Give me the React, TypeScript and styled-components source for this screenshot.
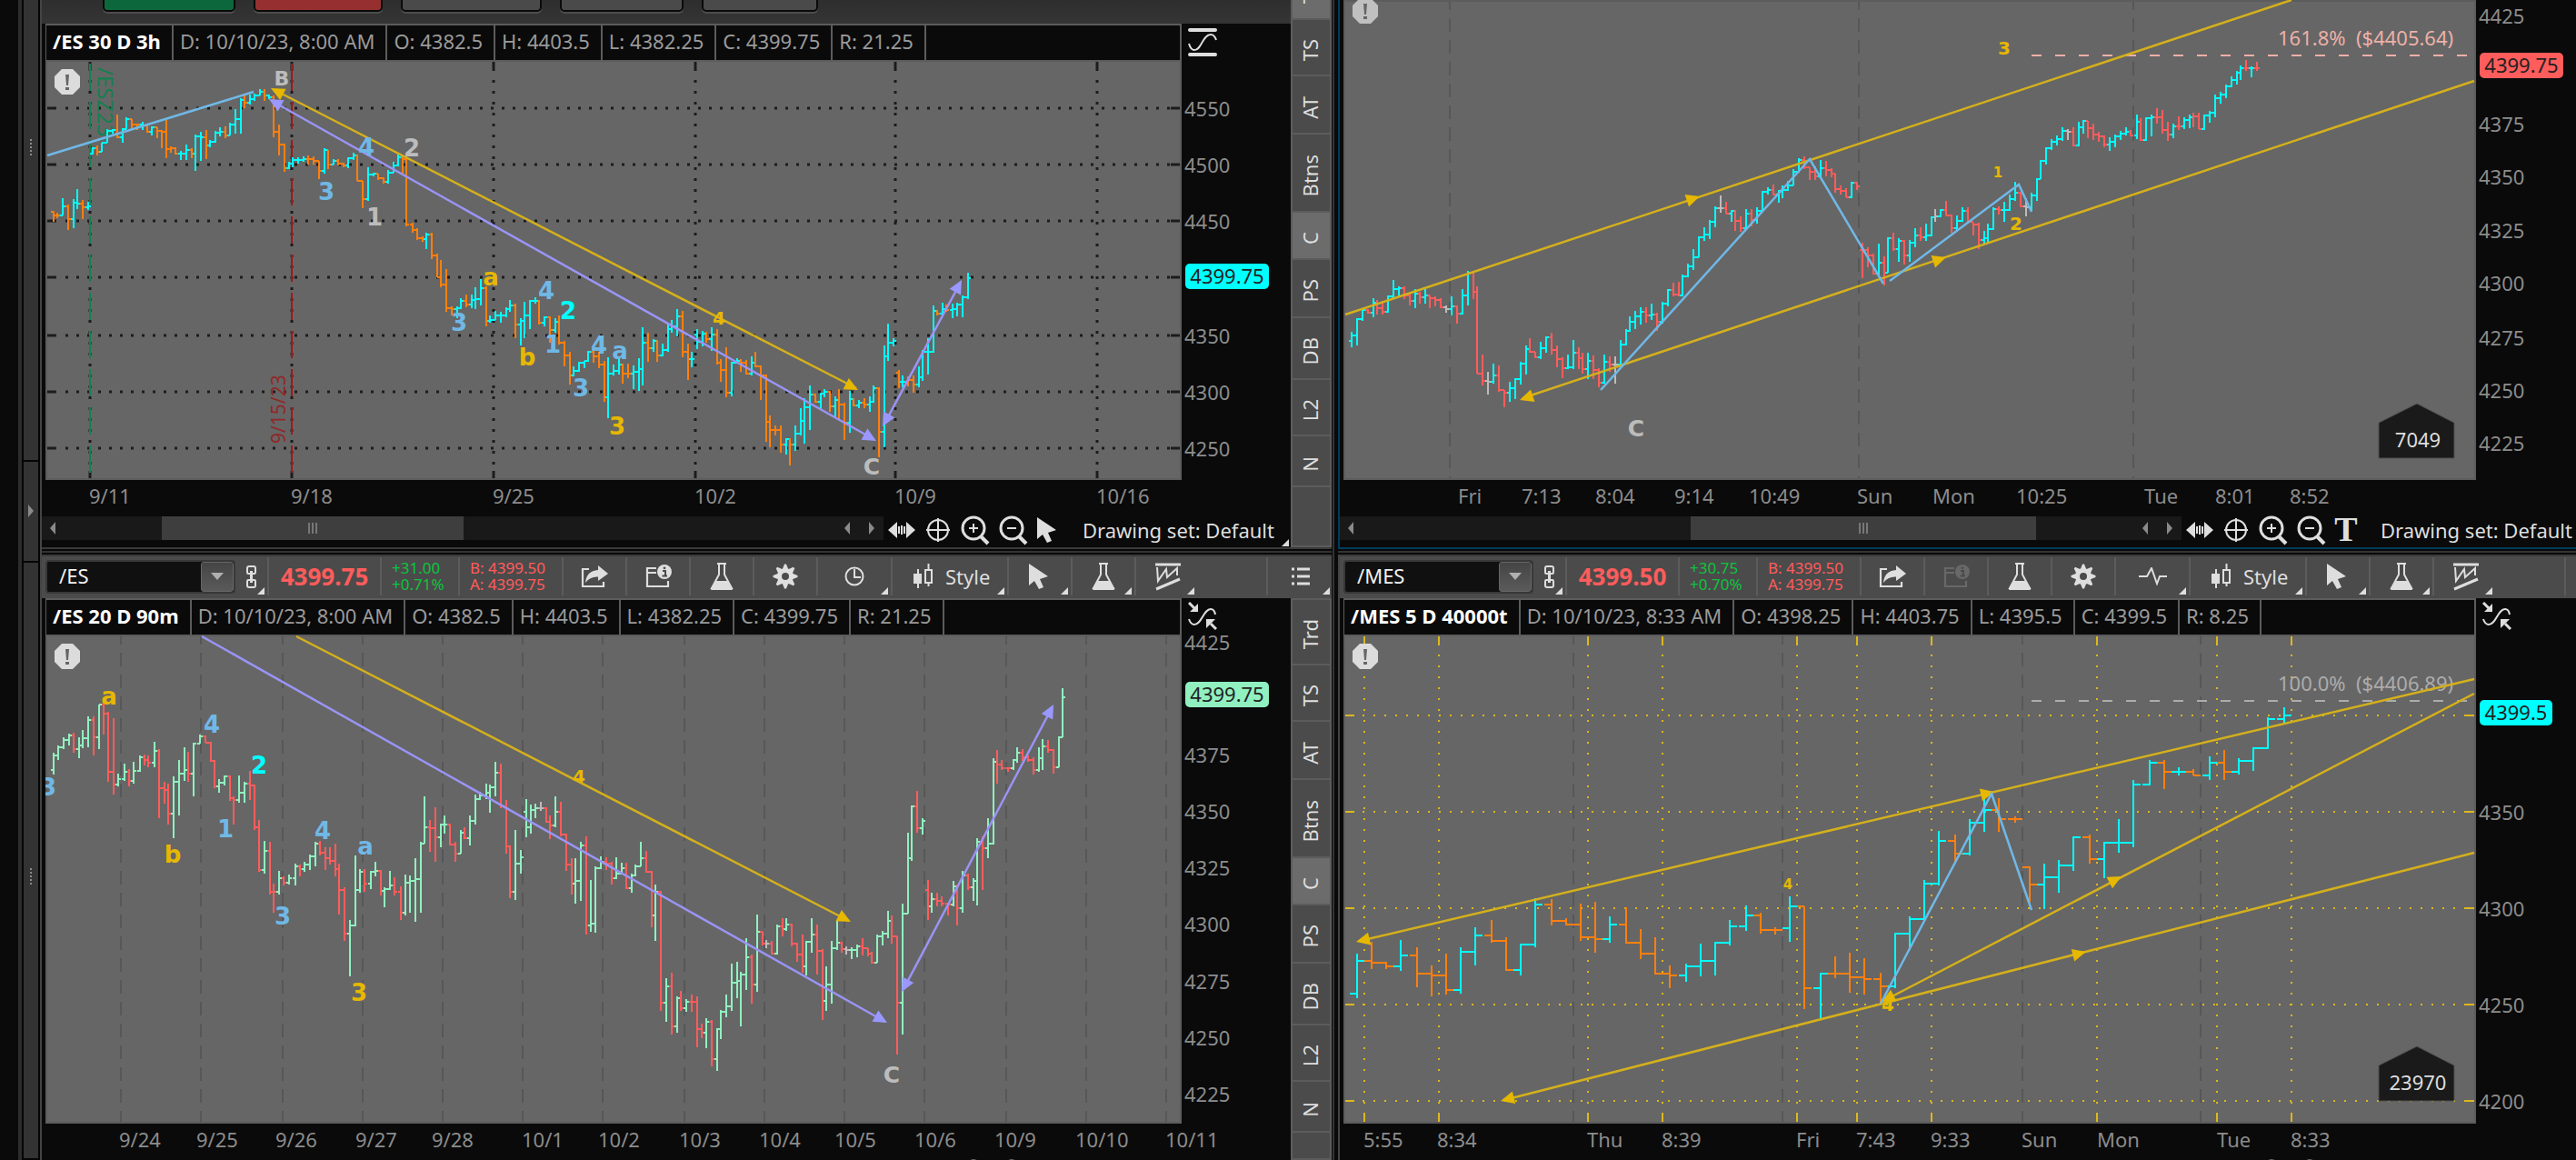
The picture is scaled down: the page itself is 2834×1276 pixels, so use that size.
import React from "react";
import styled, { createGlobalStyle, css } from "styled-components";

const font = `"Noto Sans", "Open Sans", sans-serif`;
const waveFont = `"DejaVu Sans", "Noto Sans", sans-serif`;

const color = {
  ink: "#0a0a0a",
  plot: "#666666",
  frame: "#3a3a3a",
  rule: "#5c5c5c",
  bar: "#4b4b4b",
  icon: "#dedede",
  muted: "#9a9a9a",
  axis: "#8c8c8c",
  red: "#ff5c5c",
  green: "#0cc43c",
  cyan: "#00ffff",
  orange: "#ff7f0e",
  gold: "#d4b01c",
  goldText: "#e6b800",
  violet: "#9a94f5",
  sky: "#70b8e6",
  silver: "#bcbcbc",
  mint: "#90f0c0",
};

const Global = createGlobalStyle`
  html, body { margin: 0; background: #000; }
  * { box-sizing: border-box; }
  body, button, input { font-family: ${font}; }
`;

/* ---------- page frame ---------- */

const Desk = styled.main`
  display: grid;
  grid-template-columns: 46px minmax(0, 1419fr) 7px minmax(0, 1362fr);
  height: 100vh;
  overflow: hidden;
  background: ${color.ink};
  color: ${color.icon};
  font-size: 22px;
`;

const Rail = styled.aside`
  display: flex;
  flex-direction: column;
  margin-left: 20px;
  border-left: 4px solid #2c2c2c;
  border-right: 2px solid #444;
  padding: 0 2px;
  background: #050505;
`;

const RailPart = styled.div<{ $h?: number; $top: number }>`
  display: flex;
  flex: ${(p) => (p.$h ? `0 0 ${p.$h}px` : "1")};
  align-items: flex-start;
  justify-content: center;
  padding-top: ${(p) => p.$top}px;
  background: #333;
  border-bottom: 2px solid #050505;
`;

const Column = styled.div`
  display: flex;
  flex-direction: column;
  min-width: 0;
  overflow: hidden;
`;

const ColumnGap = styled.div`
  background: linear-gradient(90deg, #0a0a0a 1px, #333 1px 3px, #0a0a0a 3px);
`;

const RowGap = styled.div<{ $edge?: string }>`
  flex: 0 0 8px;
  background: linear-gradient(${(p) => p.$edge ?? "#3a3a3a"} 2px, #0a0a0a 2px 4px, #333 4px 6px, #0a0a0a 6px);
`;

const Panel = styled.section<{ $edge?: string }>`
  display: flex;
  flex-direction: column;
  flex: none;
  ${(p) => p.$edge && css`border-left: 2px solid ${p.$edge};`}
`;

const PanelBody = styled.div`
  display: flex;
`;

const ChartArea = styled.div`
  flex: 1;
  min-width: 0;
  padding-left: 4px;
`;

const Split = styled.div`
  display: flex;
`;

/* ---------- order button strip ---------- */

const OrderStrip = styled.div`
  display: flex;
  align-items: flex-end;
  height: 26px;
  overflow: hidden;
  margin-left: -4px;
  padding: 0 0 13px 67px;
  background: linear-gradient(#2e2e2e, #353535);
`;

const OrderButton = styled.button<{ $w: number; $bg: string }>`
  flex: none;
  width: ${(p) => p.$w}px;
  height: 44px;
  margin-right: 20px;
  border: 2px solid ${color.ink};
  border-radius: 5px;
  box-shadow: 0 2px 0 #4c4c4c;
  background: ${(p) => p.$bg};
`;

/* ---------- toolbar ---------- */

const Toolbar = styled.div`
  display: flex;
  height: 48px;
  overflow: hidden;
  border-top: 2px solid ${color.frame};
  padding: 1px 0 3px;
  background: ${color.bar};
`;

const Cell = styled.div<{ $w: number; $left?: number }>`
  position: relative;
  display: flex;
  flex: 0 0 ${(p) => p.$w}px;
  align-items: center;
  justify-content: ${(p) => (p.$left === undefined ? "center" : "flex-start")};
  padding-left: ${(p) => p.$left ?? 0}px;
  border-right: 2px solid ${color.rule};
`;

const WideCell = styled(Cell)`
  padding-right: 75px;
`;

const EndCell = styled(Cell)`
  flex: 1 0 71px;
  border-right: 0;
`;

const ToolButton = styled.button`
  display: flex;
  align-items: center;
  gap: 13px;
  padding: 0;
  border: 0;
  background: none;
  color: ${color.icon};
  font-size: 22px;
  line-height: 30px;
  &:disabled { opacity: 0.2; }
`;

const Corner = styled.span<{ $right?: number }>`
  position: absolute;
  right: ${(p) => p.$right ?? 3}px;
  bottom: 1px;
  width: 8px;
  height: 8px;
  background: ${color.icon};
  clip-path: polygon(100% 0, 100% 100%, 0 100%);
`;

const Combo = styled.div`
  display: flex;
  width: 209px;
  height: 37px;
  margin-right: 12px;
  border: 2px solid #383838;
  border-radius: 4px;
  background: #101010;
`;

const ComboInput = styled.input`
  flex: 1;
  min-width: 0;
  padding: 0 0 2px 13px;
  border: 0;
  outline: 0;
  background: none;
  color: #f2f2f2;
  font-size: 22px;
`;

const ComboButton = styled.button`
  display: flex;
  align-items: center;
  justify-content: center;
  width: 36px;
  padding: 0;
  border: 1px solid #666;
  border-radius: 3px;
  background: linear-gradient(#454545, #5a5a5a);
`;

const LastPrice = styled.strong`
  color: ${color.red};
  font-size: 26px;
  line-height: 36px;
`;

const Quote = styled.div<{ $tone: string }>`
  color: ${(p) => p.$tone};
  font-size: 17px;
  line-height: 18px;
`;

/* ---------- chart header ---------- */

const Header = styled.div`
  display: flex;
  flex: 1;
  min-width: 0;
  height: 40px;
  border: solid ${color.rule};
  border-width: 2px 2px 0 1px;
  background: ${color.ink};
`;

const HeaderCell = styled.span<{ $title?: boolean }>`
  padding: 0 12px 0 7px;
  border-right: 2px solid ${color.rule};
  color: ${(p) => (p.$title ? "#fff" : color.muted)};
  font-weight: ${(p) => (p.$title ? 700 : 400)};
  font-size: 22px;
  line-height: 35px;
  white-space: nowrap;
`;

const AxisHead = styled.div<{ $w: number }>`
  flex: 0 0 ${(p) => p.$w}px;
  padding: 4px 0 0 7px;
  line-height: 0;
`;

/* ---------- chart surfaces ---------- */

const Surface = styled.svg<{ $h: number; $w?: number }>`
  display: block;
  flex: ${(p) => (p.$w ? `0 0 ${p.$w}px` : "1")};
  width: ${(p) => (p.$w ? `${p.$w}px` : "100%")};
  min-width: 0;
  height: ${(p) => p.$h}px;
  font-family: ${font};
`;

const AxisSurface = styled(Surface)`
  overflow: visible;
`;

/* ---------- bottom bar ---------- */

const BottomBar = styled.div`
  display: flex;
  align-items: flex-start;
  height: 38px;
  margin-left: -4px;
  overflow: hidden;
`;

const ScrollTrack = styled.div`
  display: flex;
  align-items: center;
  flex: 0 0 926px;
  height: 26px;
  margin-top: 4px;
  background: #191919;
`;

const ScrollThumb = styled.div<{ $start: number; $w: number }>`
  display: flex;
  align-items: center;
  justify-content: center;
  width: ${(p) => p.$w}px;
  height: 26px;
  margin: 0 auto 0 ${(p) => p.$start}px;
  background: #3e3e3e;
`;

const ScrollStep = styled.button<{ $gap?: number }>`
  padding: 0;
  border: 0;
  margin: 0 ${(p) => p.$gap ?? 0}px 0 9px;
  background: none;
  line-height: 0;
`;

const BarIcons = styled.div`
  display: flex;
  flex: none;
  align-items: center;
  gap: 12px;
  height: 38px;
  padding-left: 5px;
`;

const DrawingSet = styled.button`
  position: relative;
  flex: none;
  height: 38px;
  margin-left: 28px;
  padding: 0 19px 0 0;
  border: 0;
  background: none;
  color: ${color.icon};
  font-size: 22px;
  line-height: 36px;
  white-space: nowrap;
`;

/* ---------- side tabs ---------- */

const Tabs = styled.nav<{ $scrolled?: boolean }>`
  display: flex;
  flex-direction: column;
  flex: 0 0 45px;
  border: 2px solid ${color.rule};
  border-top-width: ${(p) => (p.$scrolled ? 0 : 2)}px;
  margin-top: ${(p) => (p.$scrolled ? -50 : 0)}px;
  height: ${(p) => (p.$scrolled ? 652 : 618)}px;
  background: ${color.bar};
`;

const Tab = styled.button<{ $h: number; $on?: boolean }>`
  display: flex;
  flex: none;
  align-items: center;
  justify-content: center;
  height: ${(p) => p.$h}px;
  padding: 6px 4px 0 0;
  border: 0;
  border-bottom: 2px solid ${color.rule};
  background: ${(p) => (p.$on ? "#6c6c6c" : color.bar)};
  color: ${color.icon};
  font-size: 22px;
`;

const TabText = styled.span`
  writing-mode: vertical-rl;
  transform: rotate(180deg);
  line-height: 36px;
`;

const TAB_LIST: [string, number][] = [
  ["Trd", 72], ["TS", 62], ["AT", 64], ["Btns", 86], ["C", 52],
  ["PS", 64], ["DB", 68], ["L2", 62], ["N", 56],
];

function SideTabs({ scrolled, active }: { scrolled?: boolean; active: string[] }) {
  return (
    <Tabs $scrolled={scrolled}>
      {TAB_LIST.map(([name, h]) => (
        <Tab key={name} $h={h} $on={active.includes(name)}>
          <TabText>{name}</TabText>
        </Tab>
      ))}
    </Tabs>
  );
}

/* ---------- icons ---------- */

const S = color.icon;

const Arrow = ({ dir }: { dir: "left" | "right" | "down" }) => {
  const d = { left: "M6 0V14L0 7Z", right: "M0 0V14L6 7Z", down: "M0 0H14L7 8Z" }[dir];
  const [w, h] = dir === "down" ? [14, 8] : [6, 14];
  return <svg width={w} height={h}><path d={d} fill={dir === "down" ? "#b0b0b0" : "#8a8a8a"} /></svg>;
};

const LinkIcon = () => (
  <svg width="12" height="25" fill="none" stroke={S} strokeWidth="2">
    <path d="M4 9H2Q1 9 1 7V3Q1 1 3 1H8Q10 1 10 3V7Q10 9 9 9H7M4 16H2Q1 16 1 18V22Q1 24 3 24H8Q10 24 10 22V18Q10 16 9 16H7" />
    <path d="M5.500 6V19" strokeWidth="3" />
  </svg>
);

const ShareIcon = () => (
  <svg width="30" height="25">
    <path d="M9 4H2V23H25V18" fill="none" stroke={S} strokeWidth="2.2" />
    <path d="M19 0L30 9L19 17V12.500Q10 12 5 19Q6 6 19 5Z" fill={S} />
  </svg>
);

const CalendarIcon = () => (
  <svg width="29" height="26">
    <path d="M12 4H2V24H25V18M2 9H12" fill="none" stroke={S} strokeWidth="2.2" />
    <circle cx="21" cy="8" r="8" fill={S} />
    <path d="M19 7H22V12M18.500 12.500H24" fill="none" stroke={color.bar} strokeWidth="2" />
    <circle cx="21" cy="3.800" r="1.400" fill={color.bar} />
  </svg>
);

const FlaskIcon = () => (
  <svg width="26" height="32">
    <path d="M8 2H18M10 3V14L2 29H24L16 14V3" fill="none" stroke={S} strokeWidth="2" />
    <path d="M7 21H19L25 29Q25.500 31 24 31H2Q.5 31 1 29Z" fill={S} />
  </svg>
);

const GearIcon = () => (
  <svg width="28" height="28" viewBox="-14 -14 28 28">
    {[0, 45, 90, 135, 180, 225, 270, 315].map((a) => (
      <path key={a} d="M-3.500 -7L-1 -13.500H1L3.500 -7Z" transform={`rotate(${a})`} fill={S} />
    ))}
    <circle r="6.500" fill="none" stroke={S} strokeWidth="5" />
  </svg>
);

const ClockIcon = () => (
  <svg width="22" height="22" fill="none" stroke={S} strokeWidth="2">
    <circle cx="11" cy="11" r="9.500" />
    <path d="M11 3V12H18" />
  </svg>
);

const PulseIcon = () => (
  <svg width="31" height="20" fill="none" stroke={S} strokeWidth="2">
    <path d="M0 10H9L14 1L20 18L23 10H31" />
  </svg>
);

const CandleIcon = () => (
  <svg width="22" height="28">
    <path d="M0 11H9V22H0ZM4 6H6V27H4Z" fill={S} />
    <path d="M13 7H20V21H13ZM16.500 0V7M16.500 21V25" fill="none" stroke={S} strokeWidth="2" />
  </svg>
);

const CursorIcon = () => (
  <svg width="22" height="29">
    <path d="M0 0V24L6 19L11 28L16 26L12 17L21 14Z" fill={S} />
  </svg>
);

const PatternIcon = () => (
  <svg width="28" height="31" fill="none" stroke={S}>
    <path d="M0 2H28M1 29L27 18" strokeWidth="3" />
    <path d="M2 5L3 20L12 7L13 16L24 6V14" strokeWidth="2" />
  </svg>
);

const ListIcon = () => (
  <svg width="20" height="20" fill="none" stroke={S} strokeWidth="3">
    <path d="M0 2H3M6 2H20M0 10H3M6 10H20M0 18H3M6 18H20" />
  </svg>
);

const PanIcon = () => (
  <svg width="30" height="20" fill={S}>
    <path d="M10 1V19L0 10ZM20 1V19L30 10ZM11 6H13V14H11ZM14 5H16V15H14ZM17 6H19V14H17Z" />
  </svg>
);

const CrosshairIcon = () => (
  <svg width="26" height="26" fill="none" stroke={S} strokeWidth="2">
    <circle cx="13" cy="13" r="11" />
    <path d="M13 0V26M0 13H26" />
  </svg>
);

const ZoomIcon = ({ plus }: { plus?: boolean }) => (
  <svg width="30" height="32" fill="none" stroke={S} overflow="visible">
    <circle cx="14" cy="14" r="12" strokeWidth="3" />
    <path d="M22 23L30 31" strokeWidth="4" />
    <path d={plus ? "M9 14H19M14 9V19" : "M9 14H19"} strokeWidth="2" />
  </svg>
);

const TextIcon = () => (
  <svg width="22" height="28" overflow="visible">
    <text x="12" y="26" textAnchor="middle" fontFamily="Liberation Serif, serif" fontWeight="700" fontSize="38" fill={S}>T</text>
  </svg>
);

const FitIcon = () => (
  <svg width="32" height="32" fill="none" stroke={S}>
    <path d="M2 3H30M2 30H30" strokeWidth="4" strokeLinecap="round" />
    <path d="M1 18Q3 25 7 25C15 25 16 8 25 8Q29 8 31 14" strokeWidth="2" />
  </svg>
);

const CollapseIcon = () => (
  <svg width="32" height="32" fill="none" stroke={S}>
    <path d="M1 19Q3 25 7 25C15 25 17 8 25 8Q29 8 30 14" strokeWidth="2" />
    <path d="M1 1L7 7M31 30L25 24" strokeWidth="3" />
    <path d="M11 2V11H2ZM20 29V19H30Z" fill={S} stroke="none" />
  </svg>
);

/* ---------- chart drawing ---------- */

type Point = [number, number];
type Span = [number, number, number, number];

interface ChartSpec {
  box: Span;
  axisWidth: number;
  up: string;
  down: string;
  tick: number;
  bars: string;
  dotted?: { color: string; x: number[]; y: number[]; phase: Point; dot: number };
  sessions: number[];
  lines: { tone: string; pts: Point[]; heads?: Span[] }[];
  labels: [string, number, number, string, number?][];
  prices: [string, number][];
  tag: { text: string; y: number; w: number; bg: string };
  times: [string, number][];
  alert: Point;
  alertTone?: string;
}

/* Each bar reads "tone x high low close [open]"; the open defaults to the last close. */
function Bars({ spec }: { spec: ChartSpec }) {
  const paths: Record<string, string> = { u: "", d: "", n: "" };
  let last: number | undefined;
  for (const item of spec.bars.trim().split(/\s*,\s*/)) {
    const tone = item[0];
    const [x, high, low, close, open] = item.slice(1).split(" ").map(Number);
    const from = open ?? last ?? close;
    paths[tone] += `M${x} ${high}V${low}M${x - spec.tick} ${from}H${x}M${x} ${close}h${spec.tick}`;
    last = close;
  }
  return (
    <g fill="none" strokeWidth="2">
      <path d={paths.n} stroke={color.silver} />
      <path d={paths.d} stroke={spec.down} />
      <path d={paths.u} stroke={spec.up} />
    </g>
  );
}

/* Arrow head whose tip is at the first point, aimed away from the second. */
function Head({ head: [x, y, fx, fy], tone }: { head: Span; tone: string }) {
  const angle = (Math.atan2(y - fy, x - fx) * 180) / Math.PI;
  return <path d="M0 0L-15 -7V7Z" transform={`translate(${x} ${y}) rotate(${angle})`} fill={tone} />;
}

function Plot({ spec, children }: { spec: ChartSpec; children?: React.ReactNode }) {
  const [x0, y0, w, h] = spec.box;
  const x1 = x0 + w;
  const y1 = y0 + h;
  const g = spec.dotted;
  return (
    <Surface $h={h} viewBox={`${x0} ${y0} ${w} ${h}`} preserveAspectRatio="none">
      <rect x={x0} y={y0} width={w} height={h} fill={color.plot} />
      <path d={spec.sessions.map((x) => `M${x} ${y0 - 4}V${y1}`).join("")} stroke="#575757" strokeWidth="2" strokeDasharray="15 9" />
      {g && (
        <g stroke={g.color} strokeWidth={g.dot}>
          <path d={g.y.map((y) => `M${x0 + g.phase[0]} ${y}H${x1 - 12}`).join("")} strokeDasharray={`${g.dot} ${12 - g.dot}`} />
          <path d={g.x.map((x) => `M${x} ${y0 + g.phase[1]}V${y1 - 10}`).join("")} strokeDasharray={`${g.dot} ${12 - g.dot}`} />
          <path d={g.y.map((y) => `M${x0 + 2} ${y}h10M${x1 - 12} ${y}h10`).join("")} />
          <path d={g.x.map((x) => `M${x} ${y0 + 2}v10M${x} ${y1 - 10}v8`).join("")} />
        </g>
      )}
      <rect x={x0 + 1} y={y0 + 1} width={w - 2} height={h - 2} fill="none" stroke={color.rule} strokeWidth="2" />
      {children}
      <Bars spec={spec} />
      {spec.lines.map((l, i) => (
        <g key={i}>
          <polyline points={l.pts.map((p) => p.join(",")).join(" ")} fill="none" stroke={l.tone} strokeWidth="2.500" />
          {l.heads?.map((hd, k) => <Head key={k} head={hd} tone={l.tone === color.gold ? color.goldText : "#9a98ff"} />)}
        </g>
      ))}
      <g fontFamily={waveFont} fontWeight="700" textAnchor="middle">
        {spec.labels.map(([t, x, y, tone, size], i) => (
          <text key={i} x={x} y={y} fill={tone} fontSize={size ?? 26}>{t}</text>
        ))}
      </g>
      <g transform={`translate(${spec.alert[0]} ${spec.alert[1]})`}>
        <path d="M-6 -14H6L14 -6V6L6 14H-6L-14 6V-6Z" fill={spec.alertTone ?? "#dcdcdc"} />
        <path d="M-2 -8H2L1 4H-1ZM-2 6H2V9H-2Z" fill="#666" />
      </g>
    </Surface>
  );
}

function PriceAxis({ spec }: { spec: ChartSpec }) {
  const [, y0, , h] = spec.box;
  const { tag } = spec;
  return (
    <AxisSurface $h={h} $w={spec.axisWidth} viewBox={`0 ${y0} ${spec.axisWidth} ${h}`}>
      {spec.prices.map(([t, y]) => (
        <text key={t} x="3" y={y + 8} fill={color.axis} fontSize="22">{t}</text>
      ))}
      <rect x="4" y={tag.y - 14} width={tag.w} height="28" rx="5" fill={tag.bg} />
      <text x={4 + tag.w / 2} y={tag.y + 8} fill="#222" fontSize="22" textAnchor="middle">{tag.text}</text>
    </AxisSurface>
  );
}

function TimeAxis({ spec }: { spec: ChartSpec }) {
  const [x0, , w] = spec.box;
  return (
    <Surface $h={36} viewBox={`${x0} 0 ${w + spec.axisWidth} 36`} preserveAspectRatio="none">
      {spec.times.map(([t, x]) => (
        <text key={t + x} x={x - 1} y="26" fill={color.axis} fontSize="22">{t}</text>
      ))}
    </Surface>
  );
}

function FibLevel({ text, y, tone }: { text: string; y: number; tone: string }) {
  return (
    <g>
      <path d={`M2235 ${y}H2722`} stroke={tone} strokeWidth="2" strokeDasharray="11 15" />
      <text x="2506" y={y - 11} fill={tone} fontSize="22" xmlSpace="preserve">{text}</text>
    </g>
  );
}

function CountFlag({ text, y }: { text: string; y: number }) {
  return (
    <g>
      <path d={`M2617 ${y}V${y - 39}L2659 ${y - 60}L2700 ${y - 39}V${y}Z`} fill="#1a1a1a" stroke="#505050" />
      <text x="2660" y={y - 12} fill={color.icon} fontSize="22" textAnchor="middle">{text}</text>
    </g>
  );
}

/* ---------- chart data ---------- */

const { gold, goldText, violet, sky, silver } = color;

const es3h: ChartSpec = {
  box: [50, 66, 1250, 462],
  axisWidth: 120,
  up: color.cyan,
  down: color.orange,
  tick: 3,
  sessions: [],
  dotted: { color: "#1c1c1c", x: [99, 321, 543, 765, 985, 1207], y: [119, 181, 243, 305, 369, 431, 493], phase: [22, 22], dot: 3 },
  bars: `d59 232 244 237 233,d63 234 240 237,u69 218 237 227,d75 225 253 241,u81 219 251 223,u85 208 230 224,d91 220 241 228,u97 222 231 227,
u102 162 170 163 169,d107 160 171 167,u112 157 167 157,u118 142 157 144,u124 142 147 143,d129 126 152 151,u135 141 157 142,u139 129 142 131,d145 131 142 137,d151 136 143 137,u157 134 143 138,d162 137 146 145,u167 139 149 140,d173 140 152 144,d178 143 163 145,d183 132 174 164,d188 161 168 163,d193 162 170 169,u199 166 176 169,u205 159 176 165,d211 163 174 169,u215 148 188 150,u221 145 177 151,d227 143 175 160,u231 154 162 156,u237 144 157 146,u242 140 150 145,d248 139 152 149,u253 135 149 137,u259 120 147 131,u265 108 147 110,d269 104 119 113,u275 104 115 109,u280 103 111 105,u286 98 105 101,d291 98 111 105,u296 104 109 107,d301 105 151 145,d307 137 171 159,d313 158 189 185,u318 178 186 180,u322 173 184 176,u328 173 180 176,u334 172 178 175,d339 171 181 175,d345 172 181 177,d351 177 197 188,u357 163 191 165,d361 165 186 181,u367 175 181 177,d372 175 182 180,d378 179 184 182,u383 173 185 174,u389 168 176 171,d393 170 199 199,d399 199 229 219,u405 184 221 192,u411 190 194 191,d416 191 198 196,d422 195 202 200,u427 187 202 190,u433 178 190 182,u438 170 183 173,d443 171 193 175,d447 173 249 247,d454 245 256 253,d459 251 264 262,d465 260 266 263,u469 256 274 258,d475 256 285 281,d481 279 305 305,d485 286 316 313,d491 296 343 339,d497 337 347 340,u503 337 350 339,u507 328 340 331,d513 324 338 335,u519 324 339 330,u523 316 340 329,u529 307 336 317,d535 315 359 353,u539 347 355 352,u545 342 352 347,u551 343 355 347,u557 338 349 340,u561 330 343 336,d567 334 372 357,u573 350 380 353,u577 332 372 347,u583 330 362 331,u589 327 334 331,d593 330 357 355,u599 348 359 349,d605 348 377 363,u611 350 366 354,d615 347 379 377,d621 375 403 391,d627 387 423 413,u631 403 414 408,u637 398 409 399,u643 397 405 397,u647 386 398 387,d653 385 399 392,d659 387 405 401,d665 397 442 437,u669 393 460 411,u675 401 413 408,u681 393 412 401,d685 400 422 411,d691 400 416 411,u697 402 428 409,u703 394 430 406,u707 360 424 377,d713 366 398 383,u719 373 387 375,d723 374 398 391,u729 378 392 385,u735 357 387 362,u739 352 366 359,u745 340 370 348,d751 342 393 387,d757 378 418 395,u761 387 404 395,
u767 362 384 376 368,u773 364 381 367,d777 365 377 373,u783 360 386 368,d789 362 401 399,d793 395 420 407,d799 382 437 432,u805 398 436 399,u811 394 400 397,d815 395 409 399,d821 396 412 411,u827 392 413 399,d831 387 404 403,d837 402 440 413,d843 412 486 464,d847 457 492 473,d853 468 479 473,d859 468 498 489,u865 482 500 483,d869 482 512 489,u875 468 496 477,u881 449 479 463,u885 438 488 448,u891 424 473 434,d897 433 443 442,u903 432 451 433,u907 428 437 431,d913 430 453 447,u919 436 460 440,d923 428 462 445,d929 443 484 465,u935 430 476 439,d939 438 447 446,u945 440 449 443,d951 438 449 445,u957 436 453 442,u961 424 443 427,d967 426 503 475,u973 380 492 392,u977 356 397 377,u983 372 381 375,
d989 407 427 420 410,u993 413 426 420,d999 414 425 418,d1005 413 432 423,u1011 403 426 415,u1015 385 419 387,u1021 372 412 387,u1027 336 388 342,d1031 341 347 345,u1037 333 347 340,d1041 335 343 341,u1048 334 350 340,u1053 333 348 335,u1059 325 349 327,u1065 300 329 306`,
  lines: [
    { tone: sky, pts: [[52, 171], [279, 101]] },
    { tone: gold, pts: [[302, 99], [942, 427]], heads: [[298, 97, 944, 429], [944, 429, 298, 97]] },
    { tone: violet, pts: [[299, 111], [961, 483]], heads: [[296, 109, 964, 485], [964, 485, 296, 109]] },
    { tone: violet, pts: [[973, 466], [1056, 312]], heads: [[971, 469, 1058, 308], [1058, 308, 971, 469]] },
  ],
  labels: [
    ["B", 310, 94, silver, 22], ["4", 403, 171, sky], ["2", 453, 172, silver], ["3", 359, 220, sky], ["1", 412, 248, silver],
    ["a", 540, 314, goldText], ["4", 601, 329, sky], ["2", 625, 351, color.cyan], ["3", 505, 364, sky], ["1", 608, 388, sky],
    ["b", 580, 402, goldText], ["4", 659, 389, sky], ["a", 682, 395, sky], ["3", 639, 436, sky], ["3", 679, 478, goldText],
    ["4", 791, 357, goldText, 20], ["C", 959, 522, silver, 25],
  ],
  prices: [["4550", 120], ["4500", 182], ["4450", 244], ["4350", 370], ["4300", 432], ["4250", 494]],
  tag: { text: "4399.75", y: 304, w: 92, bg: color.cyan },
  times: [["9/11", 99], ["9/18", 321], ["9/25", 543], ["10/2", 765], ["10/9", 985], ["10/16", 1207]],
  alert: [74, 90],
};

const es90m: ChartSpec = {
  box: [50, 698, 1250, 538],
  axisWidth: 120,
  up: color.mint,
  down: color.red,
  tick: 3,
  sessions: [133, 221, 311, 399, 487, 575, 663, 753, 841, 929, 1017, 1107, 1195, 1283],
  bars: `u59 828 852 831 847,u64 820 836 822,u70 811 824 814,u76 807 820 809,d81 806 828 824,u87 811 834 820,u91 803 823 812,u97 788 822 792,d103 788 831 811,u109 775 824 775,d114 772 808 785,d119 783 860 849,d125 790 874 863,u130 851 865 857,u137 840 859 849,d142 846 865 859,u147 838 862 848,u154 831 849 833,d159 830 842 836,d163 831 844 839,u170 816 844 826,d175 824 900 867,d181 860 884 869,d185 862 907 895,u191 854 922 860,u197 836 897 851,u203 822 859 847,d207 827 860 851,u213 817 876 818,u220 808 818 810,d226 809 817 817,d232 816 838 837,d236 836 867 865,u241 857 872 861,u247 853 864 854,d253 853 881 878,d257 876 907 880,u263 853 883 872,u269 860 883 862,d275 848 880 864,d280 863 913 910,d285 902 959 957,u291 925 961 936,d297 926 984 981,d301 972 1004 981,u307 958 984 966,d312 964 974 971,u318 962 973 966,u325 950 974 953,d330 951 964 956,u335 948 959 951,u341 940 957 942,u347 926 953 928,d352 925 941 938,d358 932 957 944,d363 932 951 947,d369 928 964 956,d373 950 1006 979,d379 976 1035 1027,u385 1012 1074 1018,u391 941 1019 979,u396 956 982 959,d401 956 981 972,u408 958 978 959,u413 948 964 958,d419 957 985 980,u423 976 998 978,u429 958 979 974,d434 965 985 981,d441 975 1012 1004,u446 962 1007 971,u451 963 1004 969,u457 944 1014 967,u463 926 1004 928,u467 876 928 910,d473 902 937 911,d479 888 948 921,u485 906 932 907,u489 897 917 907,d495 906 930 929,d501 926 948 939,u507 913 939 916,d511 910 923 922,u517 897 930 903,u523 874 907 879,u528 871 880 875,u535 862 879 872,u539 863 894 866,u545 838 876 850,d551 840 889 887,d557 880 939 931,d561 930 988 981,u567 913 990 950,u573 935 961 943,
u579 879 921 910 893,u584 885 917 891,u589 884 900 889,n595 882 892 889,d601 888 905 904,d605 897 923 908,u611 876 910 893,d617 882 920 918,d623 917 958 951,d629 944 984 972,u633 944 994 969,u639 926 991 930,d645 920 1028 1018,u650 968 1025 1016,u655 953 1026 955,u661 942 956 948,d667 943 957 950,d673 948 973 966,u678 943 967 961,u684 949 961 955,d689 949 978 977,u695 961 982 963,u699 951 964 953,u705 926 953 944,d711 936 960 959,d717 958 1020 1007,u721 973 1035 981,d727 980 1112 1103,u733 1076 1124 1085,d739 1070 1138 1129,u745 1096 1136 1098,d749 1090 1112 1109,u755 1099 1113 1102,d761 1094 1113 1102,d767 1096 1152 1132,d772 1126 1142 1136,u777 1120 1153 1124,d783 1122 1173 1165,u789 1131 1178 1132,u793 1111 1143 1113,u799 1094 1119 1107,u805 1060 1112 1081,u811 1058 1098 1079,u815 1069 1129 1072,u821 1032 1089 1053,d827 1050 1104 1083,u833 1006 1091 1025,d839 1025 1040 1038,n843 1034 1043 1038,d849 1035 1050 1049,u855 1017 1050 1019,d861 1010 1030 1022,u865 1010 1024 1017,d871 1016 1041 1038,d877 1037 1058 1050,d883 1028 1070 1063,u887 1035 1073 1036,u893 1010 1048 1028,d899 1017 1072 1046,d905 1044 1122 1101,u909 1063 1112 1083,u915 1035 1104 1043,u921 1013 1045 1037,d926 1036 1048 1044,n931 1041 1050 1045,u937 1042 1055 1045,u943 1039 1053 1041,d949 1032 1051 1043,d955 1043 1052 1049,d959 1047 1060 1059,u965 1028 1059 1030,u971 1024 1040 1027,u977 1002 1032 1013,d981 1007 1038 1030,d987 1030 1160 1103,u993 994 1138 1005,u999 916 1005 944,u1003 886 947 887,d1009 870 916 911,u1015 900 918 903,
d1021 968 1012 997 979,u1025 982 1004 989,d1031 982 997 991,d1036 986 997 994,d1043 993 1007 995,u1049 969 997 975,d1053 973 1018 999,u1059 958 1004 963,d1065 961 979 976,u1071 966 991 969,u1075 922 996 926,d1081 920 979 933,u1087 900 944 928,u1093 834 929 838,d1097 825 862 841,d1102 836 847 845,d1109 844 849 845,u1115 835 847 836,u1119 822 839 828,d1125 824 837 833,d1131 831 838 836,d1137 833 852 847,u1143 822 849 834,u1147 813 847 821,d1153 814 828 825,d1159 824 851 844,u1165 810 844 811,u1169 757 811 767`,
  lines: [
    { tone: gold, pts: [[326, 700], [934, 1013]], heads: [[936, 1014, 326, 700]] },
    { tone: violet, pts: [[222, 700], [974, 1124]], heads: [[976, 1125, 222, 700]] },
    { tone: violet, pts: [[994, 1088], [1157, 779]], heads: [[992, 1091, 1159, 775], [1159, 775, 992, 1091]] },
  ],
  labels: [
    ["a", 120, 775, goldText], ["4", 233, 806, sky], ["2", 285, 851, color.cyan], ["3", 53, 875, sky], ["1", 248, 921, sky],
    ["b", 190, 949, goldText], ["4", 355, 923, sky], ["a", 402, 940, sky], ["3", 311, 1017, sky], ["3", 395, 1101, goldText],
    ["4", 637, 861, goldText, 20], ["C", 981, 1191, silver, 25],
  ],
  prices: [["4425", 707], ["4375", 831], ["4350", 893], ["4325", 955], ["4300", 1017], ["4275", 1080], ["4250", 1142], ["4225", 1204]],
  tag: { text: "4399.75", y: 764, w: 92, bg: color.mint },
  times: [
    ["9/24", 132], ["9/25", 217], ["9/26", 304], ["9/27", 392], ["9/28", 476], ["10/1", 575], ["10/2", 659], ["10/3", 748],
    ["10/4", 836], ["10/5", 919], ["10/6", 1007], ["10/9", 1095], ["10/10", 1184], ["10/11", 1283],
  ],
  alert: [74, 722],
};

const mesTick: ChartSpec = {
  box: [1478, 0, 1246, 528],
  axisWidth: 110,
  up: color.cyan,
  down: color.red,
  tick: 3,
  sessions: [1595, 2045, 2347],
  bars: `u1487 365 382 369 375,u1493 350 380 351,u1499 340 353 341,d1505 340 345 344,u1511 328 349 333,d1515 330 346 339,d1521 331 346 343,u1527 325 344 326,u1533 308 328 318,u1539 315 325 317,d1545 315 329 325,d1551 323 336 331,u1557 318 339 323,d1562 321 334 327,u1568 318 334 325,d1573 325 339 328,d1579 326 337 330,d1585 328 339 338,n1591 336 344 340,u1597 326 347 337,d1603 336 356 345,u1609 318 346 325,u1615 298 336 300,d1621 300 329 321,d1625 315 411 411,d1631 390 424 419,n1637 409 434 420,u1643 400 422 413,d1649 402 431 429,d1655 429 448 432,u1661 420 442 427,u1667 416 439 417,u1673 398 423 400,u1679 380 412 384,d1683 372 388 387,d1689 387 394 393,u1695 376 395 383,u1701 370 388 371,d1707 366 390 385,d1713 380 404 395,d1719 393 416 405,u1725 390 406 404,u1731 374 406 388,d1737 382 406 394,d1741 388 411 406,u1747 388 417 397,d1753 391 417 407,d1759 405 426 421,u1765 390 422 398,d1771 392 409 401,n1777 392 422 401,u1783 374 402 379,u1789 362 380 364,u1793 348 365 354,u1799 342 362 348,u1805 338 357 343,d1811 338 355 347,u1817 334 352 346,d1823 344 364 354,u1829 332 356 334,u1835 318 337 319,d1841 311 326 324,d1847 310 326 325,u1851 302 326 304,u1857 290 305 293,u1863 274 297 283,u1869 260 283 261,u1875 250 265 258,u1881 242 263 244,u1887 227 250 229,n1893 215 234 229,d1899 222 235 235,u1905 231 244 232,d1909 231 254 243,d1915 238 255 251,u1921 230 253 235,d1927 230 249 242,u1933 228 246 232,u1939 210 232 211,u1945 206 214 209,d1951 203 215 214,u1957 209 223 210,u1961 204 218 209,u1967 199 210 204,u1973 186 204 189,u1979 174 190 176,d1985 172 186 184,d1991 184 198 189,d1997 183 198 194,u2003 176 196 185,d2009 177 194 187,d2015 185 195 191,d2019 191 212 208,d2025 204 214 210,d2031 207 217 217,u2037 200 218 201,d2043 200 209 205,
d2049 267 306 275 275,d2055 272 294 281,d2061 279 302 301,u2067 268 302 289,d2073 282 314 300,u2077 261 300 262,d2083 256 276 274,u2089 262 288 265,d2095 264 291 281,u2101 264 288 267,u2107 251 272 259,d2113 250 265 261,u2119 246 265 259,u2125 238 260 239,n2129 230 244 238,u2135 230 239 231,d2141 221 237 237,d2147 236 256 251,u2153 237 254 243,u2159 228 244 232,d2165 228 245 244,d2171 245 259 247,d2177 245 274 264,u2183 254 269 262,u2187 246 267 252,u2193 228 253 230,d2199 227 236 231,u2205 222 244 231,u2211 214 232 219,u2217 200 221 212,d2223 212 228 227,n2229 218 238 228,u2235 212 232 215,u2241 196 221 197,u2245 176 197 177,u2251 162 181 163,u2257 153 165 156,u2263 149 160 153,u2269 140 155 144,n2275 142 154 145,d2281 140 161 160,u2287 134 161 140,u2292 132 147 133,d2297 133 152 141,d2303 136 154 148,d2309 145 156 150,d2315 149 162 159,u2321 151 166 156,u2327 148 162 150,u2333 144 154 147,u2339 140 149 145,d2344 143 150 149,u2351 126 153 134,d2355 130 155 154,u2361 129 155 130,u2367 126 150 129,d2373 119 136 129,d2379 121 147 143,d2385 134 155 148,u2391 136 152 139,d2397 128 143 139,u2403 129 142 132,u2409 126 141 129,d2413 124 140 128,d2419 124 142 142,u2425 126 143 127,u2431 122 135 124,u2437 104 129 108,u2443 101 114 104,u2449 93 108 95,u2455 84 96 88,u2461 78 93 80,u2465 72 88 75,d2471 66 78 75,u2477 73 85 75,d2483 68 78 75`,
  lines: [
    { tone: gold, pts: [[1480, 346], [2521, 0]], heads: [[1870, 216, 1480, 346]] },
    { tone: gold, pts: [[1675, 438], [2722, 89]], heads: [[1672, 440, 2722, 89], [2141, 283, 1672, 440]] },
    { tone: sky, pts: [[1761, 429], [1991, 175], [2072, 312]] },
    { tone: sky, pts: [[2079, 309], [2221, 203], [2235, 233]] },
  ],
  labels: [["C", 1800, 480, silver, 25], ["3", 2205, 60, goldText, 20], ["1", 2198, 195, goldText, 15], ["2", 2218, 253, goldText, 20]],
  prices: [["4425", 18], ["4375", 137], ["4350", 195], ["4325", 254], ["4300", 312], ["4275", 372], ["4250", 430], ["4225", 488]],
  tag: { text: "4399.75", y: 72, w: 92, bg: color.red },
  times: [
    ["Fri", 1605], ["7:13", 1675], ["8:04", 1756], ["9:14", 1843], ["10:49", 1925], ["Sun", 2044], ["Mon", 2127],
    ["10:25", 2219], ["Tue", 2360], ["8:01", 2438], ["8:52", 2520],
  ],
  alert: [1502, 12],
  alertTone: "#c0c0c0",
};

const mes40k: ChartSpec = {
  box: [1478, 698, 1246, 538],
  axisWidth: 110,
  up: color.cyan,
  down: color.orange,
  tick: 8,
  sessions: [1731, 1961, 2225, 2421],
  dotted: { color: "#dcb81c", x: [1501, 1583, 1747, 1829, 1977, 2043, 2125, 2307, 2439, 2521], y: [787, 893, 999, 1105, 1211], phase: [21, 22], dot: 2 },
  bars: `u1493 1049 1098 1057 1093,d1509 1036 1066 1059,d1525 1058 1066 1063,u1541 1034 1068 1051,d1559 1042 1086 1071,d1575 1062 1096 1073,d1591 1049 1094 1089,u1607 1042 1093 1047,u1623 1020 1062 1029,d1641 1012 1037 1035,d1657 1031 1068 1067,u1673 1038 1073 1039,u1689 988 1042 995,d1707 989 1018 1013,d1723 1010 1018 1017,d1739 994 1035 1031,d1755 992 1048 1033,u1771 1008 1037 1017,d1789 998 1038 1037,d1805 1022 1055 1049,d1821 1031 1072 1071,d1837 1062 1087 1073,u1855 1060 1080 1063,u1871 1038 1074 1057,u1887 1036 1073 1037,u1903 1012 1040 1019,u1921 996 1024 1007,d1937 1004 1027 1023,d1953 1020 1028 1023,u1969 986 1036 997 1021,d1985 997 1110 1087,u2003 1070 1121 1071,d2019 1052 1076 1071,d2035 1048 1092 1075,d2051 1054 1094 1077,d2069 1070 1103 1085,u2085 1026 1087 1027,u2101 1008 1045 1011,u2117 968 1011 972,u2133 914 974 925,d2151 918 947 939,u2167 901 941 905,u2183 879 915 891,d2199 878 915 901,d2217 898 905 901,
d2233 953 992 973 954,u2249 950 1000 965,u2265 946 982 952,u2281 920 958 921,d2299 918 950 945,u2315 926 966 927,u2331 901 938 927,u2347 858 932 863,u2365 836 864 839,d2381 836 868 849,u2397 844 853 849,d2413 846 853 853,u2431 832 858 839,d2447 825 858 849,u2463 834 852 837,u2479 822 848 823,u2495 789 824 791,u2513 778 796 787`,
  lines: [
    { tone: gold, pts: [[1496, 1035], [2722, 747]], heads: [[1492, 1036, 2722, 747], [2194, 871, 1492, 1036]] },
    { tone: gold, pts: [[1655, 1210], [2722, 938]], heads: [[1651, 1211, 2722, 938], [2295, 1047, 1651, 1211]] },
    { tone: gold, pts: [[2072, 1101], [2722, 763]], heads: [[2070, 1102, 2722, 763], [2334, 964, 2070, 1102]] },
    { tone: sky, pts: [[2069, 1104], [2191, 873], [2235, 1001]] },
  ],
  labels: [["4", 1967, 978, goldText, 15], ["4", 2077, 1112, goldText, 20]],
  prices: [["4350", 894], ["4300", 1000], ["4250", 1106], ["4200", 1212]],
  tag: { text: "4399.5", y: 784, w: 80, bg: color.cyan },
  times: [
    ["5:55", 1501], ["8:34", 1582], ["Thu", 1747], ["8:39", 1829], ["Fri", 1977], ["7:43", 2043], ["9:33", 2125],
    ["Sun", 2225], ["Mon", 2308], ["Tue", 2440], ["8:33", 2521],
  ],
  alert: [1502, 722],
};

/* ---------- composed parts ---------- */

interface SymbolBarProps {
  symbol: string;
  last: string;
  change: string;
  pct: string;
  bid: string;
  ask: string;
  tick?: boolean;
}

function SymbolBar({ symbol, last, change, pct, bid, ask, tick }: SymbolBarProps) {
  return (
    <Toolbar>
      <Cell $w={250} $left={4}>
        <Combo>
          <ComboInput defaultValue={symbol} aria-label={symbol} />
          <ComboButton><Arrow dir="down" /></ComboButton>
        </Combo>
        <ToolButton><LinkIcon /></ToolButton>
        <Corner />
      </Cell>
      <Cell $w={124}><LastPrice>{last}</LastPrice></Cell>
      <Cell $w={86} $left={11}><Quote $tone={color.green}>{change}<br />{pct}</Quote></Cell>
      <Cell $w={114} $left={11}><Quote $tone={color.red}>B: {bid}<br />A: {ask}</Quote></Cell>
      <Cell $w={70}><ToolButton><ShareIcon /></ToolButton></Cell>
      <Cell $w={70}><ToolButton disabled={tick}><CalendarIcon /></ToolButton></Cell>
      <Cell $w={70}><ToolButton><FlaskIcon /></ToolButton></Cell>
      <Cell $w={70}><ToolButton><GearIcon /></ToolButton></Cell>
      <Cell $w={82}><ToolButton>{tick ? <PulseIcon /> : <ClockIcon />}</ToolButton><Corner /></Cell>
      <Cell $w={128} $left={23}><ToolButton><CandleIcon />Style</ToolButton><Corner /></Cell>
      <Cell $w={70} $left={22}><ToolButton><CursorIcon /></ToolButton><Corner /></Cell>
      <Cell $w={70}><ToolButton><FlaskIcon /></ToolButton><Corner /></Cell>
      <WideCell $w={145} $left={21}><ToolButton><PatternIcon /></ToolButton><Corner $right={79} /></WideCell>
      <EndCell $w={71}><ToolButton><ListIcon /></ToolButton><Corner /></EndCell>
    </Toolbar>
  );
}

function ChartHeader({ cells, axisWidth, fit }: { cells: string[]; axisWidth: number; fit?: boolean }) {
  return (
    <Split>
      <Header>
        {cells.map((c, i) => <HeaderCell key={c} $title={i === 0}>{c}</HeaderCell>)}
      </Header>
      <AxisHead $w={axisWidth}>{fit ? <FitIcon /> : <CollapseIcon />}</AxisHead>
    </Split>
  );
}

function ChartBottom({ start, width, text }: { start: number; width: number; text?: boolean }) {
  return (
    <BottomBar>
      <ScrollTrack>
        <ScrollStep><Arrow dir="left" /></ScrollStep>
        <ScrollThumb $start={start} $w={width}>
          <svg width="11" height="12" stroke="#777" strokeWidth="2"><path d="M1 0V12M5 0V12M9 0V12" /></svg>
        </ScrollThumb>
        <ScrollStep $gap={12}><Arrow dir="left" /></ScrollStep>
        <ScrollStep $gap={10}><Arrow dir="right" /></ScrollStep>
      </ScrollTrack>
      <BarIcons>
        <ToolButton><PanIcon /></ToolButton>
        <ToolButton><CrosshairIcon /></ToolButton>
        <ToolButton><ZoomIcon plus /></ToolButton>
        <ToolButton><ZoomIcon /></ToolButton>
        <ToolButton>{text ? <TextIcon /> : <CursorIcon />}</ToolButton>
      </BarIcons>
      <DrawingSet>Drawing set: Default<Corner /></DrawingSet>
    </BottomBar>
  );
}

function ChartBlock({ spec, children }: { spec: ChartSpec; children?: React.ReactNode }) {
  return (
    <>
      <Split>
        <Plot spec={spec}>{children}</Plot>
        <PriceAxis spec={spec} />
      </Split>
      <TimeAxis spec={spec} />
    </>
  );
}

const Grip = () => (
  <svg width="4" height="20" fill="#8a8a8a">
    <path d="M1 0H3V2H1ZM1 4H3V6H1ZM1 8H3V10H1ZM1 12H3V14H1ZM1 16H3V18H1Z" />
  </svg>
);

export default function App() {
  return (
    <>
      <Global />
      <Desk>
        <Rail>
          <RailPart $h={508} $top={153}><Grip /></RailPart>
          <RailPart $h={111} $top={47}><Arrow dir="right" /></RailPart>
          <RailPart $top={336}><Grip /></RailPart>
        </Rail>

        <Column>
          <Panel>
            <PanelBody>
              <ChartArea>
                <OrderStrip>
                  <OrderButton $w={146} $bg="#0c683c" />
                  <OrderButton $w={142} $bg="#963030" />
                  <OrderButton $w={155} $bg="#4a4a4a" />
                  <OrderButton $w={136} $bg="#4a4a4a" />
                  <OrderButton $w={128} $bg="#4a4a4a" />
                </OrderStrip>
                <ChartHeader
                  fit
                  axisWidth={120}
                  cells={["/ES 30 D 3h", "D: 10/10/23, 8:00 AM", "O: 4382.5", "H: 4403.5", "L: 4382.25", "C: 4399.75", "R: 21.25"]}
                />
                <ChartBlock spec={es3h}>
                  <path d="M99 70V520" stroke="#148050" strokeWidth="2" strokeDasharray="30 12" />
                  <path d="M321 70V520" stroke="#a01818" strokeWidth="2" strokeDasharray="30 12" />
                  <text transform="translate(107 74) rotate(90)" fill="#148050" fontSize="24">/ESZ23</text>
                  <text transform="translate(314 488) rotate(-90)" fill="#902828" fontSize="21">9/15/23</text>
                </ChartBlock>
                <ChartBottom start={117} width={332} />
              </ChartArea>
              <SideTabs scrolled active={["Trd", "C"]} />
            </PanelBody>
          </Panel>
          <RowGap />
          <Panel>
            <SymbolBar symbol="/ES" last="4399.75" change="+31.00" pct="+0.71%" bid="4399.50" ask="4399.75" />
            <PanelBody>
              <ChartArea>
                <ChartHeader
                  axisWidth={120}
                  cells={["/ES 20 D 90m", "D: 10/10/23, 8:00 AM", "O: 4382.5", "H: 4403.5", "L: 4382.25", "C: 4399.75", "R: 21.25"]}
                />
                <ChartBlock spec={es90m} />
                <ChartBottom start={117} width={332} />
              </ChartArea>
              <SideTabs active={["C"]} />
            </PanelBody>
          </Panel>
        </Column>

        <ColumnGap />

        <Column>
          <Panel $edge="#003c5c">
            <ChartArea>
              <ChartBlock spec={mesTick}>
                <FibLevel text="161.8%  ($4405.64)" y={61} tone="#ecb0a8" />
                <CountFlag text="7049" y={504} />
              </ChartBlock>
              <ChartBottom text start={371} width={380} />
            </ChartArea>
          </Panel>
          <RowGap $edge="#003c5c" />
          <Panel $edge="#444">
            <SymbolBar tick symbol="/MES" last="4399.50" change="+30.75" pct="+0.70%" bid="4399.50" ask="4399.75" />
            <ChartArea>
              <ChartHeader
                axisWidth={110}
                cells={["/MES 5 D 40000t", "D: 10/10/23, 8:33 AM", "O: 4398.25", "H: 4403.75", "L: 4395.5", "C: 4399.5", "R: 8.25"]}
              />
              <ChartBlock spec={mes40k}>
                <FibLevel text="100.0%  ($4406.89)" y={771} tone="#acacac" />
                <CountFlag text="23970" y={1211} />
              </ChartBlock>
              <ChartBottom text start={371} width={380} />
            </ChartArea>
          </Panel>
        </Column>
      </Desk>
    </>
  );
}
